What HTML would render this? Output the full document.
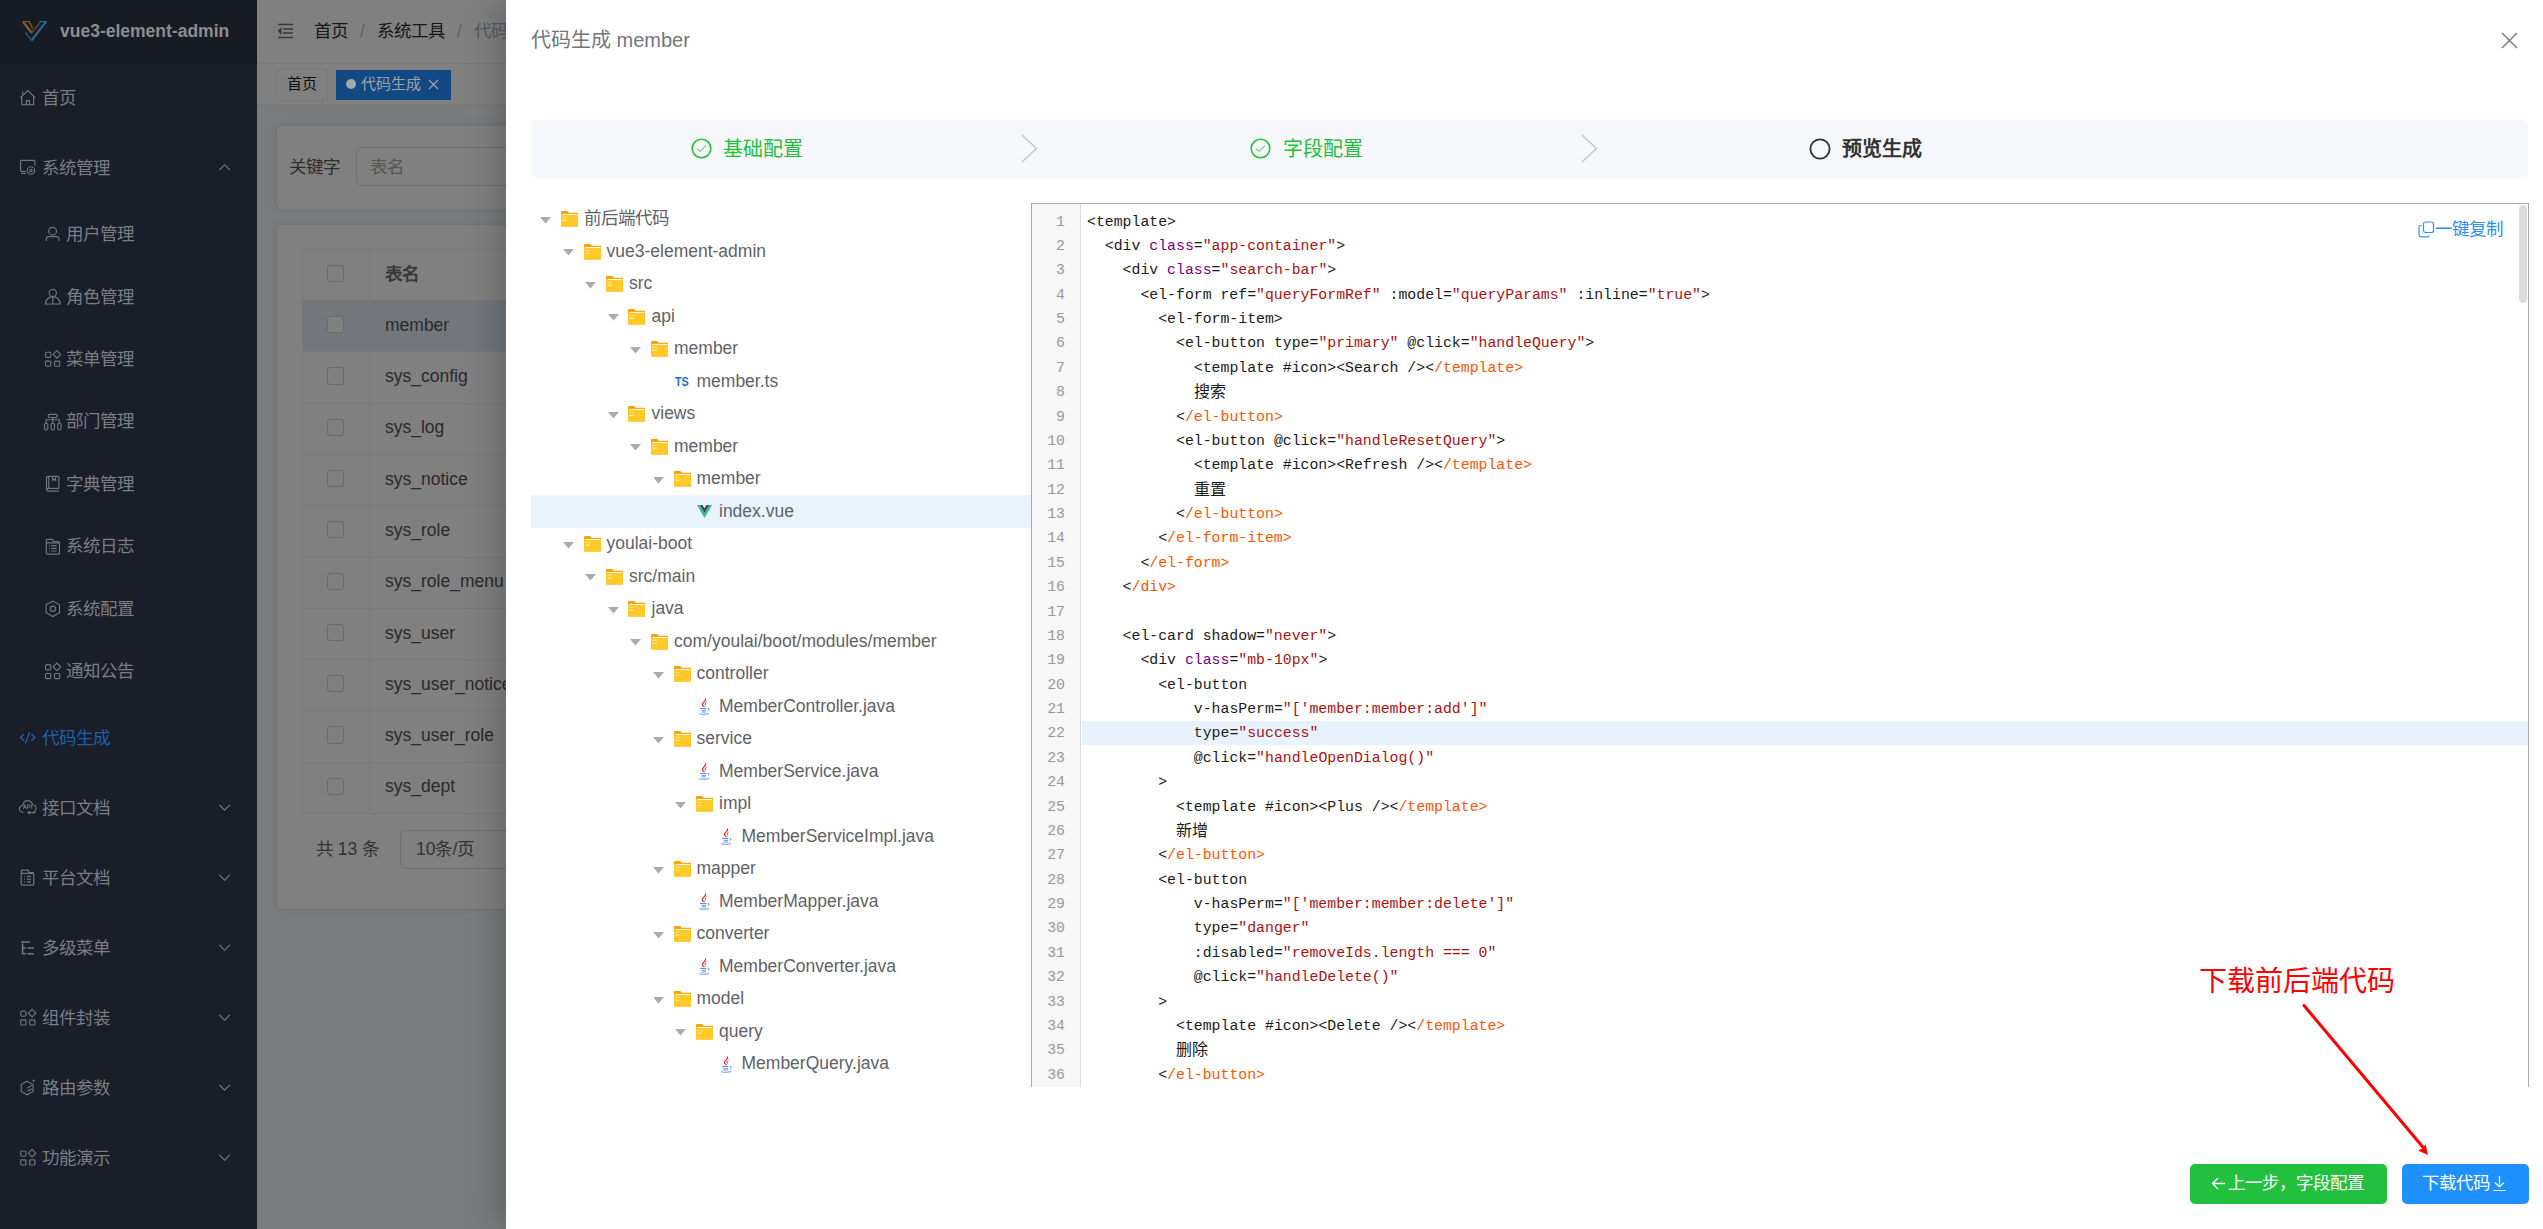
<!DOCTYPE html>
<html lang="zh-CN"><head><meta charset="utf-8"><title>code gen</title><style>
*{box-sizing:border-box;margin:0;padding:0}
html,body{width:2543px;height:1229px;overflow:hidden}
body{position:relative;font-family:"Liberation Sans",sans-serif;background:#7b7c7e}
.a{position:absolute}
.t{white-space:nowrap}
.ln{left:1032px;width:33px;text-align:right;height:24.375px;line-height:24.375px;font:14.83px/24.375px "Liberation Mono",monospace;color:#999}
.cd{height:24.375px;white-space:pre;font:14.83px/24.375px "Liberation Mono",monospace;color:#1a1a1a}
.cj{font-size:16px;font-family:"Liberation Sans",sans-serif}
</style></head><body>
<div class="a" style="left:0;top:0;width:257px;height:1229px;background:#191e29"></div>
<div class="a" style="left:0;top:0;width:257px;height:63px;background:#161b24"></div>
<svg class="a" style="left:18px;top:16px" width="34" height="30" viewBox="0 0 34 30" fill="none"><path d="M5 5.8 L13.8 17" stroke="#8a552a" stroke-width="2.4"/><path d="M4.6 5.6 H11.2 L14.8 12.6" stroke="#8a552a" stroke-width="1.3"/><path d="M14 16.5 L21.6 7" stroke="#8a552a" stroke-width="1.2"/><path d="M7.3 16.3 L13.6 24.5" stroke="#236a96" stroke-width="1.2"/><path d="M13.4 24.6 L28.2 5.4" stroke="#236a96" stroke-width="2.2"/><path d="M21.4 5.6 H28.5" stroke="#236a96" stroke-width="1.4"/></svg>
<div class="a t" style="left:60px;top:16.00px;height:30px;line-height:30px;font-size:17.5px;color:#8d8d8d;font-weight:bold;">vue3-element-admin</div>
<svg class="a" style="left:0;top:0" width="257" height="1229" viewBox="0 0 257 1229" fill="none" stroke="#72767c" stroke-width="1.15"><path d="M20.4 97.7 L27.8 90.6 L35.2 97.7 M22.7 94.6 V91.3 M21.8 96.6 V104.7 H33.6 V96.6 M26.4 104.7 V100.6 H29.3 V104.7"/><path d="M25.6 171.3 H21.6 Q20.5 171.3 20.5 170.2 V161.4 Q20.5 160.3 21.6 160.3 H33.8 Q34.9 160.3 34.9 161.4 V165.5 M21.2 173.4 H25.6"/><circle cx="30.9" cy="170.4" r="3.7"/><circle cx="30.9" cy="170.4" r="1.2"/><circle cx="52.6" cy="231.2" r="3.9"/><path d="M46.3 240.9 V239.1 Q46.3 236.6 48.8 236.6 H56.5 Q59 236.6 59 239.1 V240.9"/><circle cx="52.8" cy="292.9" r="3.6"/><path d="M45.4 304 A7.4 7.4 0 0 1 60.2 304 Z M52.8 297.2 V303.4"/><rect x="45.55" y="352.20" width="5.2" height="5.2" rx="1.1"/><path d="M56.90 350.60 L60.70 354.40 L56.90 358.20 L53.10 354.40 Z"/><rect x="45.55" y="361.05" width="5.2" height="5.2" rx="0.9"/><rect x="54.50" y="361.05" width="5.2" height="5.2" rx="0.9"/><rect x="48.3" y="414.3" width="8.9" height="3.2" rx="1"/><path d="M52.75 417.5 V423 M46.1 423 V419.7 H59.3 V423"/><rect x="44.5" y="423.2" width="3.3" height="6.8" rx="1.4"/><rect x="51.1" y="423.2" width="3.3" height="6.8" rx="1.4"/><rect x="57.7" y="423.2" width="3.3" height="6.8" rx="1.4"/><path d="M46.5 489.6 V478.3 Q46.5 476.3 48.5 476.3 H57.8 Q58.9 476.3 58.9 477.4 V488.4 H48.3 Q46.5 488.4 46.5 489.8 Q46.5 491.1 48.3 491.1 H58.9 M48.8 476.3 V488.4 M52.6 476.3 V480.4 L54.1 479.3 L55.6 480.4 V476.3"/><path d="M46.3 540.4 Q46.3 539.3 47.4 539.3 H52.4 L53.4 541.5 H58.4 Q59.5 541.5 59.5 542.6 V553 Q59.5 554.1 58.4 554.1 H47.4 Q46.3 554.1 46.3 553 Z M46.3 542.8 H59.5 M49 545.6 H49.9 M51.2 545.6 H56.6 M49 548.3 H49.9 M51.2 548.3 H56.6 M49 551 H49.9 M51.2 551 H56.6"/><path d="M52.85 601 L59.55 604.85 V612.65 L52.85 616.5 L46.15 612.65 V604.85 Z"/><circle cx="52.85" cy="608.75" r="2.6"/><rect x="45.55" y="664.60" width="5.2" height="5.2" rx="1.1"/><path d="M56.90 663.00 L60.70 666.80 L56.90 670.60 L53.10 666.80 Z"/><rect x="45.55" y="673.45" width="5.2" height="5.2" rx="0.9"/><rect x="54.50" y="673.45" width="5.2" height="5.2" rx="0.9"/><path d="M24 734.2 L20.5 737.5 L24 740.8 M31.3 734.2 L34.8 737.5 L31.3 740.8 M29.6 732.2 L25.3 743.6" stroke="#1f5ea6" stroke-width="1.4"/><path d="M23.5 812.3 Q19.2 812.3 19.4 808.6 Q19.7 805.6 22.8 805.5 Q23.6 800.6 27.7 800.6 Q31.6 800.6 32.4 804.7 Q36.1 805.1 36 808.6 Q35.9 812 33 812.3"/><path d="M23.3 808.8 L24.9 804.7 L26.5 808.8 M23.9 807.5 H25.9 M27.6 808.8 V804.7 H29 Q30.2 804.7 30.2 805.95 Q30.2 807.2 29 807.2 H27.6 M31.7 804.7 V808.8" stroke-width="0.9"/><path d="M35.5 812.6 H28 M29.6 811.1 L28 812.6 L29.6 814.1"/><path d="M21.2 871.2 Q21.2 870.1 22.3 870.1 H28 L29 872.5 H32.7 Q33.8 872.5 33.8 873.6 V884 Q33.8 885.1 32.7 885.1 H22.3 Q21.2 885.1 21.2 884 Z M21.2 873.3 H33.8 M24.2 876.3 H25 M26.9 876.3 H31 M24.2 879.1 H25 M26.9 879.1 H31 M24.2 881.9 H25 M26.9 881.9 H31"/><path d="M21.2 942 H29.8 M22.6 943.6 V953.7 H26 M22.6 948 H26 M27.3 948 H33.9 M27.3 953.7 H33.9" stroke-width="1.6"/><rect x="20.75" y="1011.00" width="5.2" height="5.2" rx="1.1"/><path d="M32.10 1009.40 L35.90 1013.20 L32.10 1017.00 L28.30 1013.20 Z"/><rect x="20.75" y="1019.85" width="5.2" height="5.2" rx="0.9"/><rect x="29.70" y="1019.85" width="5.2" height="5.2" rx="0.9"/><path d="M27.15 1081.2 L33.1 1084.6 V1091.4 L27.15 1094.8 L21.2 1091.4 V1084.6 Z M27.3 1088.1 L31.8 1085.6 M27.3 1091.3 L31.8 1088.8"/><circle cx="33.6" cy="1080.8" r="1.1" fill="#72767c" stroke="none"/><rect x="20.75" y="1151.00" width="5.2" height="5.2" rx="1.1"/><path d="M32.10 1149.40 L35.90 1153.20 L32.10 1157.00 L28.30 1153.20 Z"/><rect x="20.75" y="1159.85" width="5.2" height="5.2" rx="0.9"/><rect x="29.70" y="1159.85" width="5.2" height="5.2" rx="0.9"/><path d="M219.3 170 L224.6 164.7 L229.9 170"/><path d="M219.3 804.9 L224.6 810.2 L229.9 804.9"/><path d="M219.3 874.9 L224.6 880.2 L229.9 874.9"/><path d="M219.3 944.9 L224.6 950.2 L229.9 944.9"/><path d="M219.3 1014.9 L224.6 1020.2 L229.9 1014.9"/><path d="M219.3 1084.9 L224.6 1090.2 L229.9 1084.9"/><path d="M219.3 1154.9 L224.6 1160.2 L229.9 1154.9"/></svg>
<div class="a t" style="left:42px;top:82.50px;height:30px;line-height:30px;font-size:17.5px;color:#7a7d83;font-weight:normal;">首页</div>
<div class="a t" style="left:42px;top:152.50px;height:30px;line-height:30px;font-size:17.5px;color:#7a7d83;font-weight:normal;">系统管理</div>
<div class="a t" style="left:66px;top:219.25px;height:30px;line-height:30px;font-size:17.5px;color:#7a7d83;font-weight:normal;">用户管理</div>
<div class="a t" style="left:66px;top:281.65px;height:30px;line-height:30px;font-size:17.5px;color:#7a7d83;font-weight:normal;">角色管理</div>
<div class="a t" style="left:66px;top:344.05px;height:30px;line-height:30px;font-size:17.5px;color:#7a7d83;font-weight:normal;">菜单管理</div>
<div class="a t" style="left:66px;top:406.45px;height:30px;line-height:30px;font-size:17.5px;color:#7a7d83;font-weight:normal;">部门管理</div>
<div class="a t" style="left:66px;top:468.85px;height:30px;line-height:30px;font-size:17.5px;color:#7a7d83;font-weight:normal;">字典管理</div>
<div class="a t" style="left:66px;top:531.25px;height:30px;line-height:30px;font-size:17.5px;color:#7a7d83;font-weight:normal;">系统日志</div>
<div class="a t" style="left:66px;top:593.65px;height:30px;line-height:30px;font-size:17.5px;color:#7a7d83;font-weight:normal;">系统配置</div>
<div class="a t" style="left:66px;top:656.05px;height:30px;line-height:30px;font-size:17.5px;color:#7a7d83;font-weight:normal;">通知公告</div>
<div class="a t" style="left:42px;top:722.50px;height:30px;line-height:30px;font-size:17.5px;color:#1f5ea6;font-weight:normal;">代码生成</div>
<div class="a t" style="left:42px;top:792.50px;height:30px;line-height:30px;font-size:17.5px;color:#7a7d83;font-weight:normal;">接口文档</div>
<div class="a t" style="left:42px;top:862.50px;height:30px;line-height:30px;font-size:17.5px;color:#7a7d83;font-weight:normal;">平台文档</div>
<div class="a t" style="left:42px;top:932.50px;height:30px;line-height:30px;font-size:17.5px;color:#7a7d83;font-weight:normal;">多级菜单</div>
<div class="a t" style="left:42px;top:1002.50px;height:30px;line-height:30px;font-size:17.5px;color:#7a7d83;font-weight:normal;">组件封装</div>
<div class="a t" style="left:42px;top:1072.50px;height:30px;line-height:30px;font-size:17.5px;color:#7a7d83;font-weight:normal;">路由参数</div>
<div class="a t" style="left:42px;top:1142.50px;height:30px;line-height:30px;font-size:17.5px;color:#7a7d83;font-weight:normal;">功能演示</div>
<div class="a" style="left:257px;top:0;width:249px;height:1229px;background:#7b7c7e"></div>
<div class="a" style="left:257px;top:0;width:249px;height:63px;background:#808080"></div>
<div class="a" style="left:257px;top:63px;width:249px;height:42px;background:#808080;border-top:1px solid #797979;border-bottom:1px solid #78797b"></div>
<svg class="a" style="left:276.5px;top:23px" width="17" height="16" viewBox="0 0 17 16" fill="none" stroke="#3a3a3a" stroke-width="1.3"><path d="M1 1.5 H16 M6 6 H16 M6 10 H16 M1 14.5 H16"/><path d="M4 5.5 L1.5 8 L4 10.5 Z" fill="#3a3a3a"/></svg>
<div class="a t" style="left:314px;top:16.00px;height:30px;line-height:30px;font-size:17.5px;color:#161616;font-weight:normal;">首页</div>
<div class="a t" style="left:360px;top:16.00px;height:30px;line-height:30px;font-size:17.5px;color:#5e5e5e;font-weight:normal;">/</div>
<div class="a t" style="left:376.5px;top:16.00px;height:30px;line-height:30px;font-size:17.5px;color:#161616;font-weight:normal;">系统工具</div>
<div class="a t" style="left:457px;top:16.00px;height:30px;line-height:30px;font-size:17.5px;color:#5e5e5e;font-weight:normal;">/</div>
<div class="a t" style="left:474px;top:16.00px;height:30px;line-height:30px;font-size:17.5px;color:#535b68;font-weight:normal;">代码生成</div>
<div class="a" style="left:276px;top:69px;width:52px;height:32px;border:1px solid #78797b;background:#808080"></div>
<div class="a t" style="left:287px;top:69.00px;height:30px;line-height:30px;font-size:15px;color:#111;font-weight:normal;">首页</div>
<div class="a" style="left:336px;top:70px;width:115px;height:30px;background:#134983"></div>
<div class="a" style="left:346px;top:79px;width:10px;height:10px;border-radius:50%;background:#a3a6aa"></div>
<div class="a t" style="left:361px;top:68.50px;height:30px;line-height:30px;font-size:15px;color:#9ea3a8;font-weight:normal;">代码生成</div>
<svg class="a" style="left:428px;top:79px" width="11" height="11" viewBox="0 0 11 11" stroke="#a3a6aa" stroke-width="1.1"><path d="M1 1 L10 10 M10 1 L1 10"/></svg>
<div class="a" style="left:276px;top:125px;width:300px;height:85px;background:#808080;border:1px solid #777;border-radius:5px;box-shadow:0 0 8px rgba(0,0,0,.08)"></div>
<div class="a t" style="left:289px;top:151.50px;height:30px;line-height:30px;font-size:17.5px;color:#2e2e2e;font-weight:normal;">关键字</div>
<div class="a" style="left:356px;top:147px;width:250px;height:39px;border:1px solid #707070;border-radius:5px;background:#808080"></div>
<div class="a t" style="left:370px;top:151.50px;height:30px;line-height:30px;font-size:17.5px;color:#555;font-weight:normal;">表名</div>
<div class="a" style="left:276px;top:224px;width:300px;height:686px;background:#808080;border:1px solid #757575;border-radius:5px;box-shadow:0 0 6px rgba(0,0,0,.06)"></div>
<div class="a" style="left:302px;top:249px;width:300px;height:565px;border-left:1px solid #78797b;border-top:1px solid #78797b"></div>
<div class="a" style="left:369px;top:249px;width:1px;height:564px;background:#78797b"></div>
<div class="a" style="left:303px;top:250px;width:260px;height:50px;background:#808080"></div>
<div class="a" style="left:369px;top:250px;width:1px;height:563px;background:#78797b"></div>
<div class="a" style="left:326.5px;top:265px;width:17.3px;height:17.3px;border:1px solid #6b6b6b;border-radius:3px;background:#808080"></div>
<div class="a t" style="left:385px;top:259.00px;height:30px;line-height:30px;font-size:17.5px;color:#383838;font-weight:bold;">表名</div>
<div class="a" style="left:303px;top:300.0px;width:260px;height:51.3px;background:#73777c;border-top:1px solid #78797b"></div>
<div class="a" style="left:369px;top:300.0px;width:1px;height:51.3px;background:#78797b"></div>
<div class="a" style="left:326.5px;top:316.0px;width:17.3px;height:17.3px;border:1px solid #6b6b6b;border-radius:3px;background:#808080"></div>
<div class="a t" style="left:385px;top:309.70px;height:30px;line-height:30px;font-size:17.5px;color:#2a2a2a;font-weight:normal;">member</div>
<div class="a" style="left:303px;top:351.3px;width:260px;height:51.3px;background:#808080;border-top:1px solid #78797b"></div>
<div class="a" style="left:369px;top:351.3px;width:1px;height:51.3px;background:#78797b"></div>
<div class="a" style="left:326.5px;top:367.3px;width:17.3px;height:17.3px;border:1px solid #6b6b6b;border-radius:3px;background:#808080"></div>
<div class="a t" style="left:385px;top:361.00px;height:30px;line-height:30px;font-size:17.5px;color:#2a2a2a;font-weight:normal;">sys_config</div>
<div class="a" style="left:303px;top:402.6px;width:260px;height:51.3px;background:#808080;border-top:1px solid #78797b"></div>
<div class="a" style="left:369px;top:402.6px;width:1px;height:51.3px;background:#78797b"></div>
<div class="a" style="left:326.5px;top:418.6px;width:17.3px;height:17.3px;border:1px solid #6b6b6b;border-radius:3px;background:#808080"></div>
<div class="a t" style="left:385px;top:412.30px;height:30px;line-height:30px;font-size:17.5px;color:#2a2a2a;font-weight:normal;">sys_log</div>
<div class="a" style="left:303px;top:453.9px;width:260px;height:51.3px;background:#808080;border-top:1px solid #78797b"></div>
<div class="a" style="left:369px;top:453.9px;width:1px;height:51.3px;background:#78797b"></div>
<div class="a" style="left:326.5px;top:469.9px;width:17.3px;height:17.3px;border:1px solid #6b6b6b;border-radius:3px;background:#808080"></div>
<div class="a t" style="left:385px;top:463.60px;height:30px;line-height:30px;font-size:17.5px;color:#2a2a2a;font-weight:normal;">sys_notice</div>
<div class="a" style="left:303px;top:505.2px;width:260px;height:51.3px;background:#808080;border-top:1px solid #78797b"></div>
<div class="a" style="left:369px;top:505.2px;width:1px;height:51.3px;background:#78797b"></div>
<div class="a" style="left:326.5px;top:521.2px;width:17.3px;height:17.3px;border:1px solid #6b6b6b;border-radius:3px;background:#808080"></div>
<div class="a t" style="left:385px;top:514.90px;height:30px;line-height:30px;font-size:17.5px;color:#2a2a2a;font-weight:normal;">sys_role</div>
<div class="a" style="left:303px;top:556.5px;width:260px;height:51.3px;background:#808080;border-top:1px solid #78797b"></div>
<div class="a" style="left:369px;top:556.5px;width:1px;height:51.3px;background:#78797b"></div>
<div class="a" style="left:326.5px;top:572.5px;width:17.3px;height:17.3px;border:1px solid #6b6b6b;border-radius:3px;background:#808080"></div>
<div class="a t" style="left:385px;top:566.20px;height:30px;line-height:30px;font-size:17.5px;color:#2a2a2a;font-weight:normal;">sys_role_menu</div>
<div class="a" style="left:303px;top:607.8px;width:260px;height:51.3px;background:#808080;border-top:1px solid #78797b"></div>
<div class="a" style="left:369px;top:607.8px;width:1px;height:51.3px;background:#78797b"></div>
<div class="a" style="left:326.5px;top:623.8px;width:17.3px;height:17.3px;border:1px solid #6b6b6b;border-radius:3px;background:#808080"></div>
<div class="a t" style="left:385px;top:617.50px;height:30px;line-height:30px;font-size:17.5px;color:#2a2a2a;font-weight:normal;">sys_user</div>
<div class="a" style="left:303px;top:659.1px;width:260px;height:51.3px;background:#808080;border-top:1px solid #78797b"></div>
<div class="a" style="left:369px;top:659.1px;width:1px;height:51.3px;background:#78797b"></div>
<div class="a" style="left:326.5px;top:675.1px;width:17.3px;height:17.3px;border:1px solid #6b6b6b;border-radius:3px;background:#808080"></div>
<div class="a t" style="left:385px;top:668.80px;height:30px;line-height:30px;font-size:17.5px;color:#2a2a2a;font-weight:normal;">sys_user_notice</div>
<div class="a" style="left:303px;top:710.4px;width:260px;height:51.3px;background:#808080;border-top:1px solid #78797b"></div>
<div class="a" style="left:369px;top:710.4px;width:1px;height:51.3px;background:#78797b"></div>
<div class="a" style="left:326.5px;top:726.4px;width:17.3px;height:17.3px;border:1px solid #6b6b6b;border-radius:3px;background:#808080"></div>
<div class="a t" style="left:385px;top:720.10px;height:30px;line-height:30px;font-size:17.5px;color:#2a2a2a;font-weight:normal;">sys_user_role</div>
<div class="a" style="left:303px;top:761.7px;width:260px;height:51.3px;background:#808080;border-top:1px solid #78797b"></div>
<div class="a" style="left:369px;top:761.7px;width:1px;height:51.3px;background:#78797b"></div>
<div class="a" style="left:326.5px;top:777.7px;width:17.3px;height:17.3px;border:1px solid #6b6b6b;border-radius:3px;background:#808080"></div>
<div class="a t" style="left:385px;top:771.40px;height:30px;line-height:30px;font-size:17.5px;color:#2a2a2a;font-weight:normal;">sys_dept</div>
<div class="a" style="left:303px;top:813px;width:260px;height:1px;background:#78797b"></div>
<div class="a t" style="left:316px;top:833.50px;height:30px;line-height:30px;font-size:17.5px;color:#333;font-weight:normal;">共 13 条</div>
<div class="a" style="left:400px;top:830px;width:200px;height:39px;border:1px solid #707070;border-radius:5px"></div>
<div class="a t" style="left:416px;top:834.00px;height:30px;line-height:30px;font-size:17.5px;color:#333;font-weight:normal;">10条/页</div>
<div class="a" style="left:506px;top:0;width:2037px;height:1229px;background:#fff;box-shadow:-8px 0 32px rgba(0,0,0,.22)"></div>
<div class="a t" style="left:531px;top:24.70px;height:30px;line-height:30px;font-size:20px;color:#72767b;font-weight:normal;">代码生成 member</div>
<svg class="a" style="left:2501px;top:32px" width="17" height="17" viewBox="0 0 17 17" stroke="#72767b" stroke-width="1.4"><path d="M1 1 L16 16 M16 1 L1 16"/></svg>
<div class="a" style="left:531px;top:120px;width:1997px;height:57.5px;background:#f5f7fa;border-radius:5px"></div>
<svg class="a" style="left:691px;top:138px" width="21" height="21" viewBox="0 0 21 21" fill="none" stroke="#1fc03b"><circle cx="10.5" cy="10.5" r="9.3" stroke-width="1.6"/><path d="M6 10.5 L9 13.5 L15 7.5" stroke-width="1"/></svg>
<svg class="a" style="left:1250px;top:138px" width="21" height="21" viewBox="0 0 21 21" fill="none" stroke="#1fc03b"><circle cx="10.5" cy="10.5" r="9.3" stroke-width="1.6"/><path d="M6 10.5 L9 13.5 L15 7.5" stroke-width="1"/></svg>
<div class="a t" style="left:723px;top:133.70px;height:30px;line-height:30px;font-size:20px;color:#1fc03b;font-weight:normal;">基础配置</div>
<div class="a t" style="left:1283px;top:133.70px;height:30px;line-height:30px;font-size:20px;color:#1fc03b;font-weight:normal;">字段配置</div>
<svg class="a" style="left:1021px;top:134px" width="17" height="29" viewBox="0 0 17 29" fill="none" stroke="#c0c4cc" stroke-width="1.3"><path d="M1 1 L15.5 14.5 L1 28"/></svg>
<svg class="a" style="left:1581px;top:134px" width="17" height="29" viewBox="0 0 17 29" fill="none" stroke="#c0c4cc" stroke-width="1.3"><path d="M1 1 L15.5 14.5 L1 28"/></svg>
<svg class="a" style="left:1809px;top:138px" width="22" height="22" viewBox="0 0 22 22" fill="none" stroke="#303133" stroke-width="1.8"><circle cx="11" cy="11" r="9.6"/></svg>
<div class="a t" style="left:1842px;top:133.70px;height:30px;line-height:30px;font-size:20px;color:#303133;font-weight:bold;">预览生成</div>
<div class="a" style="left:531px;top:494.5px;width:500px;height:33px;background:#e8f3fe"></div>
<svg class="a" style="left:540px;top:217px" width="11" height="7" viewBox="0 0 11 7"><path d="M0 0 H11 L5.5 6.5 Z" fill="#a8abb2"/></svg>
<svg class="a" style="left:561px;top:211px" width="17.3" height="15.6" viewBox="0 0 18 16" preserveAspectRatio="none"><path d="M0 1 Q0 0 1 0 H6.5 L8 1.8 H17 Q18 1.8 18 2.8 V15 Q18 16 17 16 H1 Q0 16 0 15 Z" fill="#ffa000"/><path d="M0 3.5 H18 V15 Q18 16 17 16 H1 Q0 16 0 15 Z" fill="#ffca28"/><rect x="1.5" y="3" width="15.5" height="1" fill="#fff"/><rect x="1.5" y="6" width="4.5" height="0.9" fill="#ffe9a8"/><rect x="1.5" y="9" width="4.5" height="0.9" fill="#fff6da"/></svg>
<div class="a t" style="left:584.0px;top:203.20px;height:30px;line-height:30px;font-size:17.5px;color:#606266;font-weight:normal;">前后端代码</div>
<svg class="a" style="left:563px;top:249px" width="11" height="7" viewBox="0 0 11 7"><path d="M0 0 H11 L5.5 6.5 Z" fill="#a8abb2"/></svg>
<svg class="a" style="left:584px;top:244px" width="17.3" height="15.6" viewBox="0 0 18 16" preserveAspectRatio="none"><path d="M0 1 Q0 0 1 0 H6.5 L8 1.8 H17 Q18 1.8 18 2.8 V15 Q18 16 17 16 H1 Q0 16 0 15 Z" fill="#ffa000"/><path d="M0 3.5 H18 V15 Q18 16 17 16 H1 Q0 16 0 15 Z" fill="#ffca28"/><rect x="1.5" y="3" width="15.5" height="1" fill="#fff"/><rect x="1.5" y="6" width="4.5" height="0.9" fill="#ffe9a8"/><rect x="1.5" y="9" width="4.5" height="0.9" fill="#fff6da"/></svg>
<div class="a t" style="left:606.5px;top:235.70px;height:30px;line-height:30px;font-size:17.5px;color:#606266;font-weight:normal;">vue3-element-admin</div>
<svg class="a" style="left:585px;top:282px" width="11" height="7" viewBox="0 0 11 7"><path d="M0 0 H11 L5.5 6.5 Z" fill="#a8abb2"/></svg>
<svg class="a" style="left:606px;top:276px" width="17.3" height="15.6" viewBox="0 0 18 16" preserveAspectRatio="none"><path d="M0 1 Q0 0 1 0 H6.5 L8 1.8 H17 Q18 1.8 18 2.8 V15 Q18 16 17 16 H1 Q0 16 0 15 Z" fill="#ffa000"/><path d="M0 3.5 H18 V15 Q18 16 17 16 H1 Q0 16 0 15 Z" fill="#ffca28"/><rect x="1.5" y="3" width="15.5" height="1" fill="#fff"/><rect x="1.5" y="6" width="4.5" height="0.9" fill="#ffe9a8"/><rect x="1.5" y="9" width="4.5" height="0.9" fill="#fff6da"/></svg>
<div class="a t" style="left:629.0px;top:268.20px;height:30px;line-height:30px;font-size:17.5px;color:#606266;font-weight:normal;">src</div>
<svg class="a" style="left:608px;top:314px" width="11" height="7" viewBox="0 0 11 7"><path d="M0 0 H11 L5.5 6.5 Z" fill="#a8abb2"/></svg>
<svg class="a" style="left:628px;top:309px" width="17.3" height="15.6" viewBox="0 0 18 16" preserveAspectRatio="none"><path d="M0 1 Q0 0 1 0 H6.5 L8 1.8 H17 Q18 1.8 18 2.8 V15 Q18 16 17 16 H1 Q0 16 0 15 Z" fill="#ffa000"/><path d="M0 3.5 H18 V15 Q18 16 17 16 H1 Q0 16 0 15 Z" fill="#ffca28"/><rect x="1.5" y="3" width="15.5" height="1" fill="#fff"/><rect x="1.5" y="6" width="4.5" height="0.9" fill="#ffe9a8"/><rect x="1.5" y="9" width="4.5" height="0.9" fill="#fff6da"/></svg>
<div class="a t" style="left:651.5px;top:300.70px;height:30px;line-height:30px;font-size:17.5px;color:#606266;font-weight:normal;">api</div>
<svg class="a" style="left:630px;top:347px" width="11" height="7" viewBox="0 0 11 7"><path d="M0 0 H11 L5.5 6.5 Z" fill="#a8abb2"/></svg>
<svg class="a" style="left:651px;top:341px" width="17.3" height="15.6" viewBox="0 0 18 16" preserveAspectRatio="none"><path d="M0 1 Q0 0 1 0 H6.5 L8 1.8 H17 Q18 1.8 18 2.8 V15 Q18 16 17 16 H1 Q0 16 0 15 Z" fill="#ffa000"/><path d="M0 3.5 H18 V15 Q18 16 17 16 H1 Q0 16 0 15 Z" fill="#ffca28"/><rect x="1.5" y="3" width="15.5" height="1" fill="#fff"/><rect x="1.5" y="6" width="4.5" height="0.9" fill="#ffe9a8"/><rect x="1.5" y="9" width="4.5" height="0.9" fill="#fff6da"/></svg>
<div class="a t" style="left:674.0px;top:333.20px;height:30px;line-height:30px;font-size:17.5px;color:#606266;font-weight:normal;">member</div>
<div class="a" style="left:675px;top:375.5px;font:bold 12.5px/12px 'Liberation Sans',sans-serif;color:#0a73d2;transform:scaleX(0.86);transform-origin:0 0">TS</div>
<div class="a t" style="left:696.5px;top:365.70px;height:30px;line-height:30px;font-size:17.5px;color:#606266;font-weight:normal;">member.ts</div>
<svg class="a" style="left:608px;top:412px" width="11" height="7" viewBox="0 0 11 7"><path d="M0 0 H11 L5.5 6.5 Z" fill="#a8abb2"/></svg>
<svg class="a" style="left:628px;top:406px" width="17.3" height="15.6" viewBox="0 0 18 16" preserveAspectRatio="none"><path d="M0 1 Q0 0 1 0 H6.5 L8 1.8 H17 Q18 1.8 18 2.8 V15 Q18 16 17 16 H1 Q0 16 0 15 Z" fill="#ffa000"/><path d="M0 3.5 H18 V15 Q18 16 17 16 H1 Q0 16 0 15 Z" fill="#ffca28"/><rect x="1.5" y="3" width="15.5" height="1" fill="#fff"/><rect x="1.5" y="6" width="4.5" height="0.9" fill="#ffe9a8"/><rect x="1.5" y="9" width="4.5" height="0.9" fill="#fff6da"/></svg>
<div class="a t" style="left:651.5px;top:398.20px;height:30px;line-height:30px;font-size:17.5px;color:#606266;font-weight:normal;">views</div>
<svg class="a" style="left:630px;top:444px" width="11" height="7" viewBox="0 0 11 7"><path d="M0 0 H11 L5.5 6.5 Z" fill="#a8abb2"/></svg>
<svg class="a" style="left:651px;top:439px" width="17.3" height="15.6" viewBox="0 0 18 16" preserveAspectRatio="none"><path d="M0 1 Q0 0 1 0 H6.5 L8 1.8 H17 Q18 1.8 18 2.8 V15 Q18 16 17 16 H1 Q0 16 0 15 Z" fill="#ffa000"/><path d="M0 3.5 H18 V15 Q18 16 17 16 H1 Q0 16 0 15 Z" fill="#ffca28"/><rect x="1.5" y="3" width="15.5" height="1" fill="#fff"/><rect x="1.5" y="6" width="4.5" height="0.9" fill="#ffe9a8"/><rect x="1.5" y="9" width="4.5" height="0.9" fill="#fff6da"/></svg>
<div class="a t" style="left:674.0px;top:430.70px;height:30px;line-height:30px;font-size:17.5px;color:#606266;font-weight:normal;">member</div>
<svg class="a" style="left:653px;top:477px" width="11" height="7" viewBox="0 0 11 7"><path d="M0 0 H11 L5.5 6.5 Z" fill="#a8abb2"/></svg>
<svg class="a" style="left:674px;top:471px" width="17.3" height="15.6" viewBox="0 0 18 16" preserveAspectRatio="none"><path d="M0 1 Q0 0 1 0 H6.5 L8 1.8 H17 Q18 1.8 18 2.8 V15 Q18 16 17 16 H1 Q0 16 0 15 Z" fill="#ffa000"/><path d="M0 3.5 H18 V15 Q18 16 17 16 H1 Q0 16 0 15 Z" fill="#ffca28"/><rect x="1.5" y="3" width="15.5" height="1" fill="#fff"/><rect x="1.5" y="6" width="4.5" height="0.9" fill="#ffe9a8"/><rect x="1.5" y="9" width="4.5" height="0.9" fill="#fff6da"/></svg>
<div class="a t" style="left:696.5px;top:463.20px;height:30px;line-height:30px;font-size:17.5px;color:#606266;font-weight:normal;">member</div>
<svg class="a" style="left:697px;top:505.0px" width="15" height="13" viewBox="0 0 15 13"><path d="M0 0 H3 L7.5 8 L12 0 H15 L7.5 13 Z" fill="#41b883"/><path d="M3 0 H5.5 L7.5 3.5 L9.5 0 H12 L7.5 8 Z" fill="#34495e"/></svg>
<div class="a t" style="left:719.0px;top:495.70px;height:30px;line-height:30px;font-size:17.5px;color:#606266;font-weight:normal;">index.vue</div>
<svg class="a" style="left:563px;top:542px" width="11" height="7" viewBox="0 0 11 7"><path d="M0 0 H11 L5.5 6.5 Z" fill="#a8abb2"/></svg>
<svg class="a" style="left:584px;top:536px" width="17.3" height="15.6" viewBox="0 0 18 16" preserveAspectRatio="none"><path d="M0 1 Q0 0 1 0 H6.5 L8 1.8 H17 Q18 1.8 18 2.8 V15 Q18 16 17 16 H1 Q0 16 0 15 Z" fill="#ffa000"/><path d="M0 3.5 H18 V15 Q18 16 17 16 H1 Q0 16 0 15 Z" fill="#ffca28"/><rect x="1.5" y="3" width="15.5" height="1" fill="#fff"/><rect x="1.5" y="6" width="4.5" height="0.9" fill="#ffe9a8"/><rect x="1.5" y="9" width="4.5" height="0.9" fill="#fff6da"/></svg>
<div class="a t" style="left:606.5px;top:528.20px;height:30px;line-height:30px;font-size:17.5px;color:#606266;font-weight:normal;">youlai-boot</div>
<svg class="a" style="left:585px;top:574px" width="11" height="7" viewBox="0 0 11 7"><path d="M0 0 H11 L5.5 6.5 Z" fill="#a8abb2"/></svg>
<svg class="a" style="left:606px;top:569px" width="17.3" height="15.6" viewBox="0 0 18 16" preserveAspectRatio="none"><path d="M0 1 Q0 0 1 0 H6.5 L8 1.8 H17 Q18 1.8 18 2.8 V15 Q18 16 17 16 H1 Q0 16 0 15 Z" fill="#ffa000"/><path d="M0 3.5 H18 V15 Q18 16 17 16 H1 Q0 16 0 15 Z" fill="#ffca28"/><rect x="1.5" y="3" width="15.5" height="1" fill="#fff"/><rect x="1.5" y="6" width="4.5" height="0.9" fill="#ffe9a8"/><rect x="1.5" y="9" width="4.5" height="0.9" fill="#fff6da"/></svg>
<div class="a t" style="left:629.0px;top:560.70px;height:30px;line-height:30px;font-size:17.5px;color:#606266;font-weight:normal;">src/main</div>
<svg class="a" style="left:608px;top:607px" width="11" height="7" viewBox="0 0 11 7"><path d="M0 0 H11 L5.5 6.5 Z" fill="#a8abb2"/></svg>
<svg class="a" style="left:628px;top:601px" width="17.3" height="15.6" viewBox="0 0 18 16" preserveAspectRatio="none"><path d="M0 1 Q0 0 1 0 H6.5 L8 1.8 H17 Q18 1.8 18 2.8 V15 Q18 16 17 16 H1 Q0 16 0 15 Z" fill="#ffa000"/><path d="M0 3.5 H18 V15 Q18 16 17 16 H1 Q0 16 0 15 Z" fill="#ffca28"/><rect x="1.5" y="3" width="15.5" height="1" fill="#fff"/><rect x="1.5" y="6" width="4.5" height="0.9" fill="#ffe9a8"/><rect x="1.5" y="9" width="4.5" height="0.9" fill="#fff6da"/></svg>
<div class="a t" style="left:651.5px;top:593.20px;height:30px;line-height:30px;font-size:17.5px;color:#606266;font-weight:normal;">java</div>
<svg class="a" style="left:630px;top:639px" width="11" height="7" viewBox="0 0 11 7"><path d="M0 0 H11 L5.5 6.5 Z" fill="#a8abb2"/></svg>
<svg class="a" style="left:651px;top:634px" width="17.3" height="15.6" viewBox="0 0 18 16" preserveAspectRatio="none"><path d="M0 1 Q0 0 1 0 H6.5 L8 1.8 H17 Q18 1.8 18 2.8 V15 Q18 16 17 16 H1 Q0 16 0 15 Z" fill="#ffa000"/><path d="M0 3.5 H18 V15 Q18 16 17 16 H1 Q0 16 0 15 Z" fill="#ffca28"/><rect x="1.5" y="3" width="15.5" height="1" fill="#fff"/><rect x="1.5" y="6" width="4.5" height="0.9" fill="#ffe9a8"/><rect x="1.5" y="9" width="4.5" height="0.9" fill="#fff6da"/></svg>
<div class="a t" style="left:674.0px;top:625.70px;height:30px;line-height:30px;font-size:17.5px;color:#606266;font-weight:normal;">com/youlai/boot/modules/member</div>
<svg class="a" style="left:653px;top:672px" width="11" height="7" viewBox="0 0 11 7"><path d="M0 0 H11 L5.5 6.5 Z" fill="#a8abb2"/></svg>
<svg class="a" style="left:674px;top:666px" width="17.3" height="15.6" viewBox="0 0 18 16" preserveAspectRatio="none"><path d="M0 1 Q0 0 1 0 H6.5 L8 1.8 H17 Q18 1.8 18 2.8 V15 Q18 16 17 16 H1 Q0 16 0 15 Z" fill="#ffa000"/><path d="M0 3.5 H18 V15 Q18 16 17 16 H1 Q0 16 0 15 Z" fill="#ffca28"/><rect x="1.5" y="3" width="15.5" height="1" fill="#fff"/><rect x="1.5" y="6" width="4.5" height="0.9" fill="#ffe9a8"/><rect x="1.5" y="9" width="4.5" height="0.9" fill="#fff6da"/></svg>
<div class="a t" style="left:696.5px;top:658.20px;height:30px;line-height:30px;font-size:17.5px;color:#606266;font-weight:normal;">controller</div>
<svg class="a" style="left:698px;top:698px" width="13" height="17" viewBox="0 0 13 17" fill="none"><path d="M7.5 0.5 C8.5 2.5 5 4.5 4.5 6 C4 7.5 5.5 8.5 6.5 9" stroke="#f01414" stroke-width="1.1"/><path d="M8.5 4 C7 5 7 6.5 7.5 7.5" stroke="#f01414" stroke-width="0.9"/><path d="M2 10.5 H8.5 M3.5 12.3 H8 M3.5 14 H8 M10 10 C11.5 10.5 11.5 12 10 12.5 M1 15.5 C2 16.5 9 16.5 11 15.5" stroke="#5382f4" stroke-width="0.9"/></svg>
<div class="a t" style="left:719.0px;top:690.70px;height:30px;line-height:30px;font-size:17.5px;color:#606266;font-weight:normal;">MemberController.java</div>
<svg class="a" style="left:653px;top:737px" width="11" height="7" viewBox="0 0 11 7"><path d="M0 0 H11 L5.5 6.5 Z" fill="#a8abb2"/></svg>
<svg class="a" style="left:674px;top:731px" width="17.3" height="15.6" viewBox="0 0 18 16" preserveAspectRatio="none"><path d="M0 1 Q0 0 1 0 H6.5 L8 1.8 H17 Q18 1.8 18 2.8 V15 Q18 16 17 16 H1 Q0 16 0 15 Z" fill="#ffa000"/><path d="M0 3.5 H18 V15 Q18 16 17 16 H1 Q0 16 0 15 Z" fill="#ffca28"/><rect x="1.5" y="3" width="15.5" height="1" fill="#fff"/><rect x="1.5" y="6" width="4.5" height="0.9" fill="#ffe9a8"/><rect x="1.5" y="9" width="4.5" height="0.9" fill="#fff6da"/></svg>
<div class="a t" style="left:696.5px;top:723.20px;height:30px;line-height:30px;font-size:17.5px;color:#606266;font-weight:normal;">service</div>
<svg class="a" style="left:698px;top:763px" width="13" height="17" viewBox="0 0 13 17" fill="none"><path d="M7.5 0.5 C8.5 2.5 5 4.5 4.5 6 C4 7.5 5.5 8.5 6.5 9" stroke="#f01414" stroke-width="1.1"/><path d="M8.5 4 C7 5 7 6.5 7.5 7.5" stroke="#f01414" stroke-width="0.9"/><path d="M2 10.5 H8.5 M3.5 12.3 H8 M3.5 14 H8 M10 10 C11.5 10.5 11.5 12 10 12.5 M1 15.5 C2 16.5 9 16.5 11 15.5" stroke="#5382f4" stroke-width="0.9"/></svg>
<div class="a t" style="left:719.0px;top:755.70px;height:30px;line-height:30px;font-size:17.5px;color:#606266;font-weight:normal;">MemberService.java</div>
<svg class="a" style="left:675px;top:802px" width="11" height="7" viewBox="0 0 11 7"><path d="M0 0 H11 L5.5 6.5 Z" fill="#a8abb2"/></svg>
<svg class="a" style="left:696px;top:796px" width="17.3" height="15.6" viewBox="0 0 18 16" preserveAspectRatio="none"><path d="M0 1 Q0 0 1 0 H6.5 L8 1.8 H17 Q18 1.8 18 2.8 V15 Q18 16 17 16 H1 Q0 16 0 15 Z" fill="#ffa000"/><path d="M0 3.5 H18 V15 Q18 16 17 16 H1 Q0 16 0 15 Z" fill="#ffca28"/><rect x="1.5" y="3" width="15.5" height="1" fill="#fff"/><rect x="1.5" y="6" width="4.5" height="0.9" fill="#ffe9a8"/><rect x="1.5" y="9" width="4.5" height="0.9" fill="#fff6da"/></svg>
<div class="a t" style="left:719.0px;top:788.20px;height:30px;line-height:30px;font-size:17.5px;color:#606266;font-weight:normal;">impl</div>
<svg class="a" style="left:720px;top:828px" width="13" height="17" viewBox="0 0 13 17" fill="none"><path d="M7.5 0.5 C8.5 2.5 5 4.5 4.5 6 C4 7.5 5.5 8.5 6.5 9" stroke="#f01414" stroke-width="1.1"/><path d="M8.5 4 C7 5 7 6.5 7.5 7.5" stroke="#f01414" stroke-width="0.9"/><path d="M2 10.5 H8.5 M3.5 12.3 H8 M3.5 14 H8 M10 10 C11.5 10.5 11.5 12 10 12.5 M1 15.5 C2 16.5 9 16.5 11 15.5" stroke="#5382f4" stroke-width="0.9"/></svg>
<div class="a t" style="left:741.5px;top:820.70px;height:30px;line-height:30px;font-size:17.5px;color:#606266;font-weight:normal;">MemberServiceImpl.java</div>
<svg class="a" style="left:653px;top:867px" width="11" height="7" viewBox="0 0 11 7"><path d="M0 0 H11 L5.5 6.5 Z" fill="#a8abb2"/></svg>
<svg class="a" style="left:674px;top:861px" width="17.3" height="15.6" viewBox="0 0 18 16" preserveAspectRatio="none"><path d="M0 1 Q0 0 1 0 H6.5 L8 1.8 H17 Q18 1.8 18 2.8 V15 Q18 16 17 16 H1 Q0 16 0 15 Z" fill="#ffa000"/><path d="M0 3.5 H18 V15 Q18 16 17 16 H1 Q0 16 0 15 Z" fill="#ffca28"/><rect x="1.5" y="3" width="15.5" height="1" fill="#fff"/><rect x="1.5" y="6" width="4.5" height="0.9" fill="#ffe9a8"/><rect x="1.5" y="9" width="4.5" height="0.9" fill="#fff6da"/></svg>
<div class="a t" style="left:696.5px;top:853.20px;height:30px;line-height:30px;font-size:17.5px;color:#606266;font-weight:normal;">mapper</div>
<svg class="a" style="left:698px;top:893px" width="13" height="17" viewBox="0 0 13 17" fill="none"><path d="M7.5 0.5 C8.5 2.5 5 4.5 4.5 6 C4 7.5 5.5 8.5 6.5 9" stroke="#f01414" stroke-width="1.1"/><path d="M8.5 4 C7 5 7 6.5 7.5 7.5" stroke="#f01414" stroke-width="0.9"/><path d="M2 10.5 H8.5 M3.5 12.3 H8 M3.5 14 H8 M10 10 C11.5 10.5 11.5 12 10 12.5 M1 15.5 C2 16.5 9 16.5 11 15.5" stroke="#5382f4" stroke-width="0.9"/></svg>
<div class="a t" style="left:719.0px;top:885.70px;height:30px;line-height:30px;font-size:17.5px;color:#606266;font-weight:normal;">MemberMapper.java</div>
<svg class="a" style="left:653px;top:932px" width="11" height="7" viewBox="0 0 11 7"><path d="M0 0 H11 L5.5 6.5 Z" fill="#a8abb2"/></svg>
<svg class="a" style="left:674px;top:926px" width="17.3" height="15.6" viewBox="0 0 18 16" preserveAspectRatio="none"><path d="M0 1 Q0 0 1 0 H6.5 L8 1.8 H17 Q18 1.8 18 2.8 V15 Q18 16 17 16 H1 Q0 16 0 15 Z" fill="#ffa000"/><path d="M0 3.5 H18 V15 Q18 16 17 16 H1 Q0 16 0 15 Z" fill="#ffca28"/><rect x="1.5" y="3" width="15.5" height="1" fill="#fff"/><rect x="1.5" y="6" width="4.5" height="0.9" fill="#ffe9a8"/><rect x="1.5" y="9" width="4.5" height="0.9" fill="#fff6da"/></svg>
<div class="a t" style="left:696.5px;top:918.20px;height:30px;line-height:30px;font-size:17.5px;color:#606266;font-weight:normal;">converter</div>
<svg class="a" style="left:698px;top:958px" width="13" height="17" viewBox="0 0 13 17" fill="none"><path d="M7.5 0.5 C8.5 2.5 5 4.5 4.5 6 C4 7.5 5.5 8.5 6.5 9" stroke="#f01414" stroke-width="1.1"/><path d="M8.5 4 C7 5 7 6.5 7.5 7.5" stroke="#f01414" stroke-width="0.9"/><path d="M2 10.5 H8.5 M3.5 12.3 H8 M3.5 14 H8 M10 10 C11.5 10.5 11.5 12 10 12.5 M1 15.5 C2 16.5 9 16.5 11 15.5" stroke="#5382f4" stroke-width="0.9"/></svg>
<div class="a t" style="left:719.0px;top:950.70px;height:30px;line-height:30px;font-size:17.5px;color:#606266;font-weight:normal;">MemberConverter.java</div>
<svg class="a" style="left:653px;top:997px" width="11" height="7" viewBox="0 0 11 7"><path d="M0 0 H11 L5.5 6.5 Z" fill="#a8abb2"/></svg>
<svg class="a" style="left:674px;top:991px" width="17.3" height="15.6" viewBox="0 0 18 16" preserveAspectRatio="none"><path d="M0 1 Q0 0 1 0 H6.5 L8 1.8 H17 Q18 1.8 18 2.8 V15 Q18 16 17 16 H1 Q0 16 0 15 Z" fill="#ffa000"/><path d="M0 3.5 H18 V15 Q18 16 17 16 H1 Q0 16 0 15 Z" fill="#ffca28"/><rect x="1.5" y="3" width="15.5" height="1" fill="#fff"/><rect x="1.5" y="6" width="4.5" height="0.9" fill="#ffe9a8"/><rect x="1.5" y="9" width="4.5" height="0.9" fill="#fff6da"/></svg>
<div class="a t" style="left:696.5px;top:983.20px;height:30px;line-height:30px;font-size:17.5px;color:#606266;font-weight:normal;">model</div>
<svg class="a" style="left:675px;top:1029px" width="11" height="7" viewBox="0 0 11 7"><path d="M0 0 H11 L5.5 6.5 Z" fill="#a8abb2"/></svg>
<svg class="a" style="left:696px;top:1024px" width="17.3" height="15.6" viewBox="0 0 18 16" preserveAspectRatio="none"><path d="M0 1 Q0 0 1 0 H6.5 L8 1.8 H17 Q18 1.8 18 2.8 V15 Q18 16 17 16 H1 Q0 16 0 15 Z" fill="#ffa000"/><path d="M0 3.5 H18 V15 Q18 16 17 16 H1 Q0 16 0 15 Z" fill="#ffca28"/><rect x="1.5" y="3" width="15.5" height="1" fill="#fff"/><rect x="1.5" y="6" width="4.5" height="0.9" fill="#ffe9a8"/><rect x="1.5" y="9" width="4.5" height="0.9" fill="#fff6da"/></svg>
<div class="a t" style="left:719.0px;top:1015.70px;height:30px;line-height:30px;font-size:17.5px;color:#606266;font-weight:normal;">query</div>
<svg class="a" style="left:720px;top:1056px" width="13" height="17" viewBox="0 0 13 17" fill="none"><path d="M7.5 0.5 C8.5 2.5 5 4.5 4.5 6 C4 7.5 5.5 8.5 6.5 9" stroke="#f01414" stroke-width="1.1"/><path d="M8.5 4 C7 5 7 6.5 7.5 7.5" stroke="#f01414" stroke-width="0.9"/><path d="M2 10.5 H8.5 M3.5 12.3 H8 M3.5 14 H8 M10 10 C11.5 10.5 11.5 12 10 12.5 M1 15.5 C2 16.5 9 16.5 11 15.5" stroke="#5382f4" stroke-width="0.9"/></svg>
<div class="a t" style="left:741.5px;top:1048.20px;height:30px;line-height:30px;font-size:17.5px;color:#606266;font-weight:normal;">MemberQuery.java</div>
<div class="a" style="left:1031px;top:203px;width:1498px;height:884px;border:1px solid #a9a9a9;border-bottom:none;background:#fff"></div>
<div class="a" style="left:1032px;top:204px;width:49px;height:883px;background:#f7f7f7;border-right:1px solid #ddd"></div>
<div class="a" style="left:1082px;top:720.6px;width:1446px;height:24.3px;background:#e8f2ff"></div>
<div class="a" style="left:2519px;top:205px;width:8px;height:98px;background:#dcdcdd;border-radius:4px"></div>
<div class="a ln" style="top:209.60px">1</div>
<div class="a cd" style="top:209.60px;left:1087.00px"><span style="color:#1a1a1a">&lt;template&gt;</span></div>
<div class="a ln" style="top:233.97px">2</div>
<div class="a cd" style="top:233.97px;left:1104.80px"><span style="color:#1a1a1a">&lt;div </span><span style="color:#708">class</span><span style="color:#1a1a1a">=</span><span style="color:#a11">&quot;app-container&quot;</span><span style="color:#1a1a1a">&gt;</span></div>
<div class="a ln" style="top:258.35px">3</div>
<div class="a cd" style="top:258.35px;left:1122.60px"><span style="color:#1a1a1a">&lt;div </span><span style="color:#708">class</span><span style="color:#1a1a1a">=</span><span style="color:#a11">&quot;search-bar&quot;</span><span style="color:#1a1a1a">&gt;</span></div>
<div class="a ln" style="top:282.73px">4</div>
<div class="a cd" style="top:282.73px;left:1140.40px"><span style="color:#1a1a1a">&lt;el-form ref=</span><span style="color:#a11">&quot;queryFormRef&quot;</span><span style="color:#1a1a1a"> :model=</span><span style="color:#a11">&quot;queryParams&quot;</span><span style="color:#1a1a1a"> :inline=</span><span style="color:#a11">&quot;true&quot;</span><span style="color:#1a1a1a">&gt;</span></div>
<div class="a ln" style="top:307.10px">5</div>
<div class="a cd" style="top:307.10px;left:1158.20px"><span style="color:#1a1a1a">&lt;el-form-item&gt;</span></div>
<div class="a ln" style="top:331.48px">6</div>
<div class="a cd" style="top:331.48px;left:1176.00px"><span style="color:#1a1a1a">&lt;el-button type=</span><span style="color:#a11">&quot;primary&quot;</span><span style="color:#1a1a1a"> @click=</span><span style="color:#a11">&quot;handleQuery&quot;</span><span style="color:#1a1a1a">&gt;</span></div>
<div class="a ln" style="top:355.85px">7</div>
<div class="a cd" style="top:355.85px;left:1193.80px"><span style="color:#1a1a1a">&lt;template #icon&gt;&lt;Search /&gt;&lt;</span><span style="color:#f50">/template&gt;</span></div>
<div class="a ln" style="top:380.23px">8</div>
<div class="a cd" style="top:380.23px;left:1193.80px"><span class="cj">搜索</span></div>
<div class="a ln" style="top:404.60px">9</div>
<div class="a cd" style="top:404.60px;left:1176.00px"><span style="color:#1a1a1a">&lt;</span><span style="color:#f50">/el-button&gt;</span></div>
<div class="a ln" style="top:428.98px">10</div>
<div class="a cd" style="top:428.98px;left:1176.00px"><span style="color:#1a1a1a">&lt;el-button @click=</span><span style="color:#a11">&quot;handleResetQuery&quot;</span><span style="color:#1a1a1a">&gt;</span></div>
<div class="a ln" style="top:453.35px">11</div>
<div class="a cd" style="top:453.35px;left:1193.80px"><span style="color:#1a1a1a">&lt;template #icon&gt;&lt;Refresh /&gt;&lt;</span><span style="color:#f50">/template&gt;</span></div>
<div class="a ln" style="top:477.73px">12</div>
<div class="a cd" style="top:477.73px;left:1193.80px"><span class="cj">重置</span></div>
<div class="a ln" style="top:502.10px">13</div>
<div class="a cd" style="top:502.10px;left:1176.00px"><span style="color:#1a1a1a">&lt;</span><span style="color:#f50">/el-button&gt;</span></div>
<div class="a ln" style="top:526.48px">14</div>
<div class="a cd" style="top:526.48px;left:1158.20px"><span style="color:#1a1a1a">&lt;</span><span style="color:#f50">/el-form-item&gt;</span></div>
<div class="a ln" style="top:550.85px">15</div>
<div class="a cd" style="top:550.85px;left:1140.40px"><span style="color:#1a1a1a">&lt;</span><span style="color:#f50">/el-form&gt;</span></div>
<div class="a ln" style="top:575.23px">16</div>
<div class="a cd" style="top:575.23px;left:1122.60px"><span style="color:#1a1a1a">&lt;</span><span style="color:#f50">/div&gt;</span></div>
<div class="a ln" style="top:599.60px">17</div>
<div class="a cd" style="top:599.60px;left:1087.00px"></div>
<div class="a ln" style="top:623.98px">18</div>
<div class="a cd" style="top:623.98px;left:1122.60px"><span style="color:#1a1a1a">&lt;el-card shadow=</span><span style="color:#a11">&quot;never&quot;</span><span style="color:#1a1a1a">&gt;</span></div>
<div class="a ln" style="top:648.35px">19</div>
<div class="a cd" style="top:648.35px;left:1140.40px"><span style="color:#1a1a1a">&lt;div </span><span style="color:#708">class</span><span style="color:#1a1a1a">=</span><span style="color:#a11">&quot;mb-10px&quot;</span><span style="color:#1a1a1a">&gt;</span></div>
<div class="a ln" style="top:672.73px">20</div>
<div class="a cd" style="top:672.73px;left:1158.20px"><span style="color:#1a1a1a">&lt;el-button</span></div>
<div class="a ln" style="top:697.10px">21</div>
<div class="a cd" style="top:697.10px;left:1193.80px"><span style="color:#1a1a1a">v-hasPerm=</span><span style="color:#a11">&quot;[&#x27;member:member:add&#x27;]&quot;</span></div>
<div class="a ln" style="top:721.48px">22</div>
<div class="a cd" style="top:721.48px;left:1193.80px"><span style="color:#1a1a1a">type=</span><span style="color:#a11">&quot;success&quot;</span></div>
<div class="a ln" style="top:745.85px">23</div>
<div class="a cd" style="top:745.85px;left:1193.80px"><span style="color:#1a1a1a">@click=</span><span style="color:#a11">&quot;handleOpenDialog()&quot;</span></div>
<div class="a ln" style="top:770.23px">24</div>
<div class="a cd" style="top:770.23px;left:1158.20px"><span style="color:#1a1a1a">&gt;</span></div>
<div class="a ln" style="top:794.60px">25</div>
<div class="a cd" style="top:794.60px;left:1176.00px"><span style="color:#1a1a1a">&lt;template #icon&gt;&lt;Plus /&gt;&lt;</span><span style="color:#f50">/template&gt;</span></div>
<div class="a ln" style="top:818.98px">26</div>
<div class="a cd" style="top:818.98px;left:1176.00px"><span class="cj">新增</span></div>
<div class="a ln" style="top:843.35px">27</div>
<div class="a cd" style="top:843.35px;left:1158.20px"><span style="color:#1a1a1a">&lt;</span><span style="color:#f50">/el-button&gt;</span></div>
<div class="a ln" style="top:867.73px">28</div>
<div class="a cd" style="top:867.73px;left:1158.20px"><span style="color:#1a1a1a">&lt;el-button</span></div>
<div class="a ln" style="top:892.10px">29</div>
<div class="a cd" style="top:892.10px;left:1193.80px"><span style="color:#1a1a1a">v-hasPerm=</span><span style="color:#a11">&quot;[&#x27;member:member:delete&#x27;]&quot;</span></div>
<div class="a ln" style="top:916.48px">30</div>
<div class="a cd" style="top:916.48px;left:1193.80px"><span style="color:#1a1a1a">type=</span><span style="color:#a11">&quot;danger&quot;</span></div>
<div class="a ln" style="top:940.85px">31</div>
<div class="a cd" style="top:940.85px;left:1193.80px"><span style="color:#1a1a1a">:disabled=</span><span style="color:#a11">&quot;removeIds.length === 0&quot;</span></div>
<div class="a ln" style="top:965.23px">32</div>
<div class="a cd" style="top:965.23px;left:1193.80px"><span style="color:#1a1a1a">@click=</span><span style="color:#a11">&quot;handleDelete()&quot;</span></div>
<div class="a ln" style="top:989.60px">33</div>
<div class="a cd" style="top:989.60px;left:1158.20px"><span style="color:#1a1a1a">&gt;</span></div>
<div class="a ln" style="top:1013.98px">34</div>
<div class="a cd" style="top:1013.98px;left:1176.00px"><span style="color:#1a1a1a">&lt;template #icon&gt;&lt;Delete /&gt;&lt;</span><span style="color:#f50">/template&gt;</span></div>
<div class="a ln" style="top:1038.35px">35</div>
<div class="a cd" style="top:1038.35px;left:1176.00px"><span class="cj">删除</span></div>
<div class="a ln" style="top:1062.72px">36</div>
<div class="a cd" style="top:1062.72px;left:1158.20px"><span style="color:#1a1a1a">&lt;</span><span style="color:#f50">/el-button&gt;</span></div>
<svg class="a" style="left:2418px;top:221px" width="17" height="17" viewBox="0 0 17 17" fill="none" stroke="#2e8ff5" stroke-width="1.2"><rect x="5.5" y="1" width="10" height="10.5" rx="2"/><path d="M3.5 4.5 H2.5 Q1 4.5 1 6 V14 Q1 15.8 2.8 15.8 H9.5 Q11 15.8 11 14.5"/></svg>
<div class="a t" style="left:2435px;top:213.50px;height:30px;line-height:30px;font-size:17.5px;color:#2e8ff5;font-weight:normal;">一键复制</div>
<div class="a" style="left:2190px;top:1164px;width:197px;height:40px;background:#21c13f;border-radius:5px"></div>
<svg class="a" style="left:2211px;top:1176px" width="15" height="15" viewBox="0 0 15 15" fill="none" stroke="#fff" stroke-width="1.3"><path d="M14 7.5 H1.5 M7 2 L1.5 7.5 L7 13"/></svg>
<div class="a t" style="left:2228px;top:1167.50px;height:30px;line-height:30px;font-size:17.5px;color:#fff;font-weight:normal;">上一步，字段配置</div>
<div class="a" style="left:2402px;top:1164px;width:127px;height:40px;background:#1e90ff;border-radius:5px"></div>
<div class="a t" style="left:2422px;top:1167.50px;height:30px;line-height:30px;font-size:17.5px;color:#fff;font-weight:normal;">下载代码</div>
<svg class="a" style="left:2492px;top:1175px" width="15" height="17" viewBox="0 0 15 17" fill="none" stroke="#fff" stroke-width="1.2"><path d="M7.5 1 V12 M3 7.5 L7.5 12 L12 7.5 M1.5 15.5 H13.5"/></svg>
<div class="a t" style="left:2199px;top:967.00px;height:30px;line-height:30px;font-size:28px;color:#f00;font-weight:normal;">下载前后端代码</div>
<svg class="a" style="left:2290px;top:995px" width="150" height="170" viewBox="0 0 150 170"><path d="M14 10.5 L134.5 154" stroke="#f00" stroke-width="3" stroke-linecap="round"/><path d="M138 160 L128 155.5 L132.6 153.6 L135.6 149.2 Z" fill="#f00"/></svg>
</body></html>
